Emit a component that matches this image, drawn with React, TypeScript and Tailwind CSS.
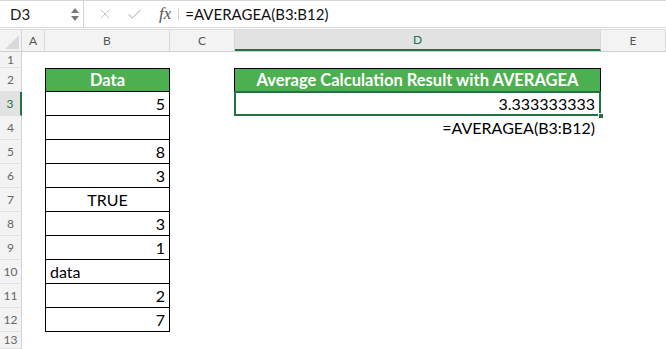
import { FiX, FiCheck } from "react-icons/fi";

const cols = [
  { key: "A", w: "w-[23px]" },
  { key: "B", w: "w-[125px]" },
  { key: "C", w: "w-[65px]" },
  { key: "D", w: "w-[366px]" },
  { key: "E", w: "w-[65px]" },
];

type Cell = { text?: string; align?: "left" | "right" | "center" };

const data: { row: number; b?: Cell }[] = [
  { row: 3, b: { text: "5", align: "right" } },
  { row: 4, b: {} },
  { row: 5, b: { text: "8", align: "right" } },
  { row: 6, b: { text: "3", align: "right" } },
  { row: 7, b: { text: "TRUE", align: "center" } },
  { row: 8, b: { text: "3", align: "right" } },
  { row: 9, b: { text: "1", align: "right" } },
  { row: 10, b: { text: "data", align: "left" } },
  { row: 11, b: { text: "2", align: "right" } },
  { row: 12, b: { text: "7", align: "right" } },
];

function RowHead({ n, active }: { n: number; active?: boolean }) {
  return (
    <div
      className={
        "w-[22px] shrink-0 flex items-center justify-center text-[12px] border-b border-[#e0e0e0] " +
        (active
          ? "bg-[#e2e2e2] text-[#217346] border-r-2 border-r-[#217346]"
          : "bg-[#f3f3f3] text-[#666] border-r border-r-[#d4d4d4]")
      }
    >
      {n}
    </div>
  );
}

function bAlign(a?: string) {
  if (a === "right") return "justify-end pr-[4px]";
  if (a === "center") return "justify-center";
  return "justify-start pl-[4px]";
}

export default function App() {
  return (
    <div className="w-[666px] h-[349px] overflow-hidden bg-white font-['Lato','Open_Sans',sans-serif] text-black">
      {/* formula bar */}
      <div className="h-[30px] flex items-stretch bg-white border-t border-[#d6d6d6] border-b-[3px] border-b-[#dcdcdc] border-double">
        <div className="w-[84px] shrink-0 flex items-center justify-between pl-[10px] pr-[4px] border-r border-[#d4d4d4]">
          <span className="text-[15px] text-[#222]">D3</span>
          <div className="flex flex-col items-center gap-[3px] text-[#777]">
            <svg width="8" height="5" viewBox="0 0 8 5"><path d="M0 5 L4 0 L8 5 Z" fill="#7a7a7a" /></svg>
            <svg width="8" height="5" viewBox="0 0 8 5"><path d="M0 0 L8 0 L4 5 Z" fill="#7a7a7a" /></svg>
          </div>
        </div>
        <div className="flex items-center pl-[13px] text-[#c4c4c4]">
          <FiX size={16} strokeWidth={1.5} />
          <FiCheck size={17} strokeWidth={1.5} className="ml-[13px]" />
          <span className="font-['Liberation_Serif',serif] italic text-[17px] text-[#555] ml-[16px]">fx</span>
        </div>
        <div className="w-px bg-[#d4d4d4] my-[7px] ml-[7px]" />
        <div className="flex items-center pl-[6px] text-[15px] text-[#111]">=AVERAGEA(B3:B12)</div>
      </div>

      {/* column headers */}
      <div className="h-[22px] flex bg-[#f3f3f3] border-b border-[#d0d0d0]">
        <div className="w-[22px] shrink-0 border-r border-[#d4d4d4] relative">
          <svg className="absolute right-[2px] bottom-[2px]" width="14" height="14" viewBox="0 0 14 14">
            <path d="M14 0 L14 14 L0 14 Z" fill="#d9d9d9" />
          </svg>
        </div>
        {cols.map((c) => (
          <div
            key={c.key}
            className={
              c.w +
              " shrink-0 flex items-center justify-center text-[12px] border-r border-[#d9d9d9] " +
              (c.key === "D" ? "bg-[#e2e2e2] text-[#217346] border-b-2 border-b-[#217346]" : "text-[#555]")
            }
          >
            {c.key}
          </div>
        ))}
      </div>

      {/* row 1 */}
      <div className="h-[16px] flex">
        <RowHead n={1} />
      </div>

      {/* row 2: headers */}
      <div className="h-[24px] flex">
        <RowHead n={2} />
        <div className="w-[23px] shrink-0" />
        <div className="w-[125px] shrink-0 border border-black bg-[#4caf50] text-white font-bold text-[16.5px] flex items-center justify-center">
          Data
        </div>
        <div className="w-[65px] shrink-0" />
        <div className="w-[367px] shrink-0 -ml-px border border-black bg-[#4caf50] text-white font-bold text-[16.5px] flex items-center justify-center">
          Average Calculation Result with AVERAGEA
        </div>
      </div>

      {data.map((r) => (
        <div key={r.row} className="h-[24px] flex">
          <RowHead n={r.row} active={r.row === 3} />
          <div className="w-[23px] shrink-0" />
          <div
            className={
              "w-[125px] shrink-0 border-x border-b border-black flex items-center text-[16px] " + bAlign(r.b?.align)
            }
          >
            {r.b?.text}
          </div>
          <div className="w-[65px] shrink-0" />
          {r.row === 3 && (
            <div className="w-[367px] shrink-0 -ml-px border-x border-b border-black relative flex items-center justify-end pr-[5px] text-[16px]">
              3.333333333
              <div className="absolute -left-px -top-px -right-px -bottom-px border-2 border-[#217346]" />
              <div className="absolute -right-[4px] -bottom-[4px] w-[6px] h-[6px] bg-[#217346] border border-white" />
            </div>
          )}
          {r.row === 4 && (
            <div className="w-[366px] shrink-0 flex items-center justify-end pr-[6px] text-[16px]">
              =AVERAGEA(B3:B12)
            </div>
          )}
        </div>
      ))}

      {/* row 13 */}
      <div className="h-[17px] flex">
        <RowHead n={13} />
      </div>
    </div>
  );
}
